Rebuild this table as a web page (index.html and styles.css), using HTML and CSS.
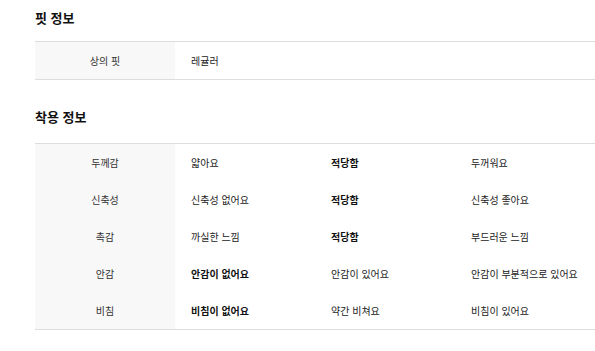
FILE: index.html
```html
<!DOCTYPE html>
<html lang="ko">
<head>
<meta charset="utf-8">
<link rel="stylesheet" href="styles.css">
</head>
<body>
<section class="sec">
  <h2 class="title">핏 정보</h2>
  <div class="table">
    <div class="row row-fit">
      <div class="label">상의 핏</div>
      <div class="val">레귤러</div>
    </div>
  </div>
</section>
<section class="sec sec2">
  <h2 class="title">착용 정보</h2>
  <div class="table">
    <div class="row">
      <div class="label">두께감</div>
      <div class="val">얇아요</div>
      <div class="val on">적당함</div>
      <div class="val">두꺼워요</div>
    </div>
    <div class="row">
      <div class="label">신축성</div>
      <div class="val">신축성 없어요</div>
      <div class="val on">적당함</div>
      <div class="val">신축성 좋아요</div>
    </div>
    <div class="row">
      <div class="label">촉감</div>
      <div class="val">까실한 느낌</div>
      <div class="val on">적당함</div>
      <div class="val">부드러운 느낌</div>
    </div>
    <div class="row">
      <div class="label">안감</div>
      <div class="val on">안감이 없어요</div>
      <div class="val">안감이 있어요</div>
      <div class="val">안감이 부분적으로 있어요</div>
    </div>
    <div class="row">
      <div class="label">비침</div>
      <div class="val on">비침이 없어요</div>
      <div class="val">약간 비쳐요</div>
      <div class="val">비침이 있어요</div>
    </div>
  </div>
</section>
</body>
</html>
```

FILE: styles.css
```css
html, body {
  margin: 0;
  padding: 0;
  background: #fff;
}
body {
  padding-left: 35px;
  font-family: "Noto Sans CJK KR", "Noto Sans", sans-serif;
  color: #222;
}
.sec {
  padding-top: 8px;
}
.sec2 {
  padding-top: 27px;
}
.title {
  margin: 0 0 13px;
  font-size: 13px;
  line-height: 20px;
  font-weight: 700;
  color: #111;
}
.sec2 .title {
  margin-bottom: 16px;
}
.table {
  border-top: 1px solid #dddddd;
  border-bottom: 1px solid #dddddd;
}
.row {
  display: grid;
  grid-template-columns: 140px 140px 140px 1fr;
  height: 37px;
  align-items: center;
  font-size: 10px;
  line-height: 14px;
}
.row-fit {
  grid-template-columns: 140px 1fr;
}
.label {
  background: #f8f8f8;
  height: 100%;
  display: flex;
  align-items: center;
  justify-content: center;
  color: #333;
}
.val {
  padding-left: 16px;
}
.val.on {
  font-weight: 700;
  color: #111;
}
```
